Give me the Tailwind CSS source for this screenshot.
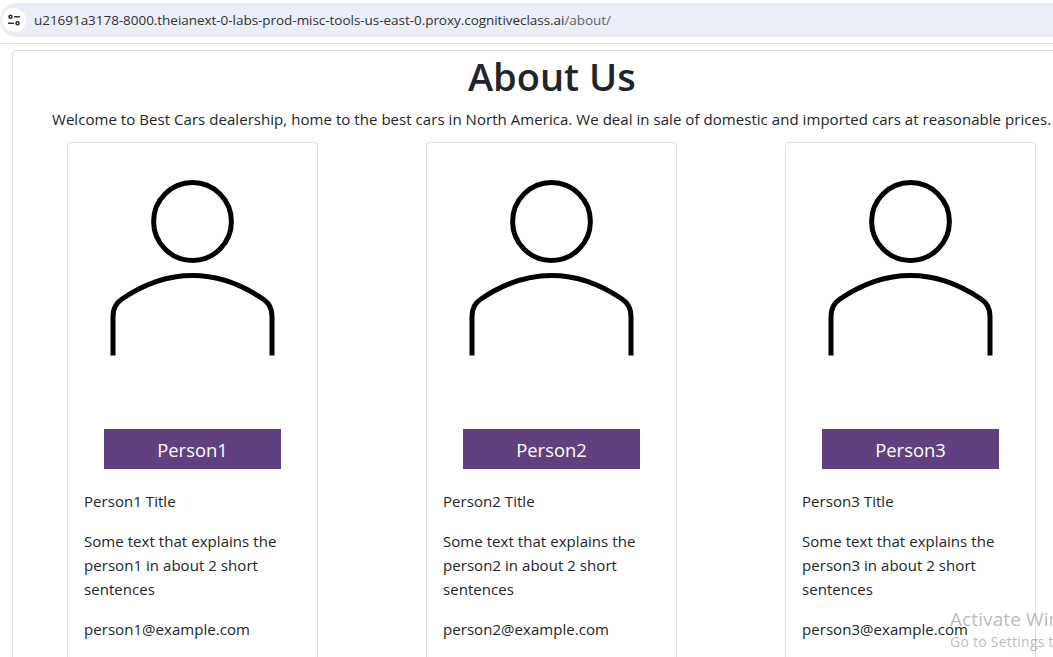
<!DOCTYPE html>
<html lang="en">
<head>
<meta charset="utf-8">
<title>About Us</title>
<script src="https://cdn.jsdelivr.net/npm/@tailwindcss/browser@4"></script>
</head>
<body class="relative h-[657px] w-[1053px] overflow-hidden bg-white font-['Open_Sans','Noto_Sans',sans-serif] text-[15px] leading-6 tracking-[0.05px] text-[#212529]">
<svg class="hidden">
  <symbol id="person" viewBox="0 0 250 250" fill="none" stroke="#000" stroke-width="5">
    <circle cx="124.5" cy="78.500" r="38.900"/>
    <path d="M45 212.500V173C45 165 48 160 54 156C76 141 100 132.500 124.500 132.500S173 141 195 156C201 160 204 165 204 173V212.500"/>
  </symbol>
</svg>
<header class="flex h-11 border-b border-[#dfe1e5] pt-[3px]">
  <div class="flex h-[34px] w-full items-center rounded-l-full bg-[#ebeef7] pl-[2px]">
    <div class="flex size-6 items-center justify-center rounded-full bg-white">
      <svg class="size-[14px]" viewBox="0 0 14 14" fill="none" stroke="#303236" stroke-width="1.6"><circle cx="3.500" cy="3.800" r="1.500"/><path d="M7 3.800h6M1 10.200h6"/><circle cx="10.500" cy="10.200" r="1.500"/></svg>
    </div>
    <div class="ml-2 text-[13.5px] tracking-[-0.04px] whitespace-nowrap text-[#303236]">u21691a3178-8000.theianext-0-labs-prod-misc-tools-us-east-0.proxy.cognitiveclass.ai<span class="text-[#5f6368]">/about/</span></div>
  </div>
</header>
<main class="mt-[6px] ml-3 h-[620px] w-[1041px] rounded-tl-[4px] border-t border-l border-[#dfdfdf]">
  <h1 class="ml-[455px] mt-px h-12 text-[38px] leading-12 font-semibold tracking-normal whitespace-nowrap">About Us</h1>
  <p class="mt-[7px] ml-[39px] whitespace-nowrap">Welcome to Best Cars dealership, home to the best cars in North America. We deal in sale of domestic and imported cars at reasonable prices.</p>
  <div class="mt-[11px] ml-[54px] flex gap-[108px]">
    <section class="h-[540px] w-[251px] shrink-0 rounded-[4px] border border-[#dfdfdf]">
      <svg class="block h-[250px] w-[250px]"><use href="#person"/></svg>
      <div class="mt-9 ml-9 h-10 w-[177px] bg-[#61407f] text-center text-[18.4px] leading-[42px] tracking-normal text-white">Person1</div>
      <div class="mt-5 ml-4 flex flex-col gap-4 whitespace-nowrap">
        <p>Person1 Title</p>
        <p>Some text that explains the<br>person1 in about 2 short<br>sentences</p>
        <p>person1@example.com</p>
      </div>
    </section>
    <section class="h-[540px] w-[251px] shrink-0 rounded-[4px] border border-[#dfdfdf]">
      <svg class="block h-[250px] w-[250px]"><use href="#person"/></svg>
      <div class="mt-9 ml-9 h-10 w-[177px] bg-[#61407f] text-center text-[18.4px] leading-[42px] tracking-normal text-white">Person2</div>
      <div class="mt-5 ml-4 flex flex-col gap-4 whitespace-nowrap">
        <p>Person2 Title</p>
        <p>Some text that explains the<br>person2 in about 2 short<br>sentences</p>
        <p>person2@example.com</p>
      </div>
    </section>
    <section class="h-[540px] w-[251px] shrink-0 rounded-[4px] border border-[#dfdfdf]">
      <svg class="block h-[250px] w-[250px]"><use href="#person"/></svg>
      <div class="mt-9 ml-9 h-10 w-[177px] bg-[#61407f] text-center text-[18.4px] leading-[42px] tracking-normal text-white">Person3</div>
      <div class="mt-5 ml-4 flex flex-col gap-4 whitespace-nowrap">
        <p>Person3 Title</p>
        <p>Some text that explains the<br>person3 in about 2 short<br>sentences</p>
        <p>person3@example.com</p>
      </div>
    </section>
  </div>
</main>
<aside class="absolute top-[606px] left-[950px] w-[103px] overflow-hidden whitespace-nowrap text-[#8c8c8c]/60">
  <div class="text-[19px] leading-[26px] tracking-[0.1px]">Activate Windows</div>
  <div class="text-[14px] leading-5 tracking-[0.25px]">Go to Settings to activate Windows.</div>
</aside>
</body>
</html>
